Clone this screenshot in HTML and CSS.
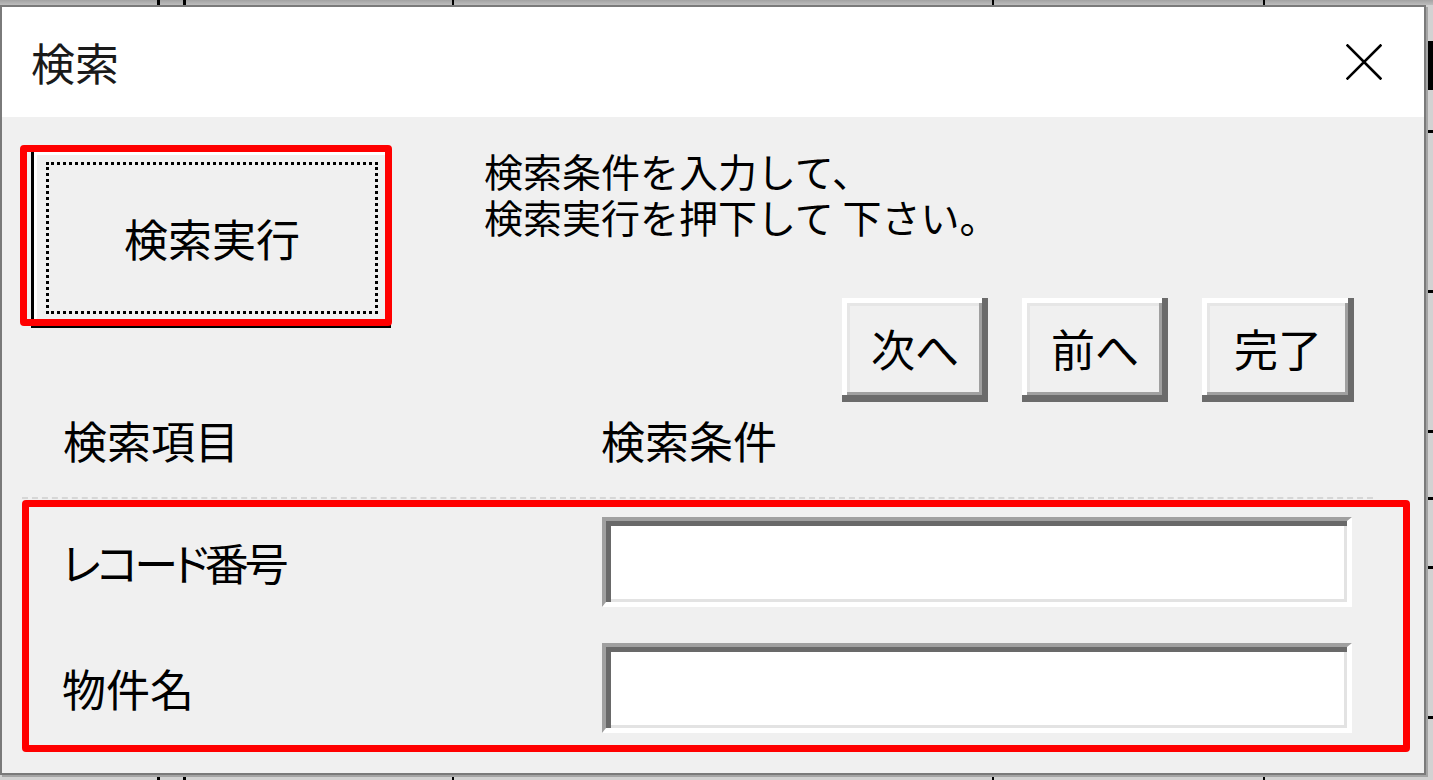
FILE: index.html
```html
<!DOCTYPE html>
<html lang="ja">
<head>
<meta charset="utf-8">
<title>検索</title>
<link rel="stylesheet" href="styles.css">
</head>
<body>
<div class="dialog">
  <div class="titlebar">
    <span class="title">検索</span>
    <svg class="close" width="36" height="36" viewBox="0 0 36 36" aria-label="閉じる">
      <path d="M1.5 1.5 L34.5 34.5 M34.5 1.5 L1.5 34.5" stroke="#000" stroke-width="2.6" fill="none" stroke-linecap="square"/>
    </svg>
  </div>
  <div class="body">
    <div class="top">
      <div class="exec-wrap">
        <button class="exec"><span class="focus">検索実行</span></button>
        <span class="mark mark-exec"></span>
      </div>
      <div class="side">
        <div class="hint">
          <span class="hint-line">検索条件を入力して、</span>
          <span class="hint-line">検索実行を押下して 下さい。</span>
        </div>
        <div class="nav">
          <button class="btn">次へ</button>
          <button class="btn">前へ</button>
          <button class="btn btn-wide">完了</button>
        </div>
      </div>
    </div>
    <div class="heads">
      <span>検索項目</span>
      <span>検索条件</span>
    </div>
    <div class="rule"></div>
    <div class="fields">
      <span class="label label-kana">レコード番号</span>
      <div class="textbox"></div>
      <span class="label">物件名</span>
      <div class="textbox"></div>
    </div>
  </div>
</div>
</body>
</html>
```
FILE: styles.css
```css
html, body {
  margin: 0;
  padding: 0;
}

body {
  width: 1433px;
  height: 780px;
  overflow: hidden;
  font-family: "Noto Sans CJK JP", "Noto Sans", sans-serif;
  color: #000;
  background-color: #d2d2d2;
  background-image:
    linear-gradient(#000, #000),
    linear-gradient(#000, #000),
    linear-gradient(#000, #000),
    linear-gradient(#000, #000),
    linear-gradient(#000, #000),
    linear-gradient(#000, #000),
    linear-gradient(#000, #000),
    linear-gradient(#000, #000),
    linear-gradient(#000, #000),
    linear-gradient(#000, #000),
    linear-gradient(#000, #000),
    linear-gradient(#000, #000),
    linear-gradient(#a3a3a3, #bdbdbd);
  background-position:
    157px 0, 183px 0, 452px 0, 992px 0, 1263px 0,
    1428px 41px, 1428px 130px, 1428px 290px, 1428px 430px, 1428px 497px, 1428px 566px, 1428px 716px,
    0 0;
  background-size:
    3px 100%, 3px 100%, 2px 100%, 2px 100%, 2px 100%,
    5px 49px, 5px 3px, 5px 3px, 5px 3px, 5px 3px, 5px 3px, 5px 3px,
    100% 5px;
  background-repeat: no-repeat;
}

.dialog {
  margin-top: 5px;
  width: 1426px;
  height: 770px;
  box-sizing: border-box;
  border: 2px solid #7a7a7a;
  background: #f0f0f0;
  box-shadow: 2px 2px 0 #a4a4a4;
  display: flex;
  flex-direction: column;
}

.titlebar {
  height: 110px;
  flex: none;
  background: #fff;
  display: flex;
  align-items: center;
  justify-content: space-between;
  padding: 0 42px 0 29px;
}

.title {
  font-size: 44px;
  line-height: 1;
  color: #1a1a1a;
}

.close {
  display: block;
}

.body {
  flex: 1;
  padding: 30px 0 0 29px;
}

.top {
  display: flex;
  align-items: flex-start;
}

.exec-wrap {
  position: relative;
  margin-top: 5px;
  flex: none;
}

.exec {
  display: flex;
  width: 360px;
  height: 176px;
  box-sizing: border-box;
  margin: 0;
  padding: 0;
  font: inherit;
  color: #000;
  background: #f0f0f0;
  border: none;
  border-left: 3px solid #000;
  border-right: 3px solid #000;
  border-bottom: 3px solid #000;
  box-shadow: inset 3px 3px 0 #fff, inset -3px -3px 0 #a0a0a0;
}

.focus {
  flex: 1;
  margin: 10px 10px 11px 12px;
  border: 3px dotted #000;
  display: flex;
  align-items: center;
  justify-content: center;
  font-size: 44px;
  line-height: 1;
}

.mark {
  position: absolute;
  box-sizing: border-box;
  border: 7px solid #ff0000;
  border-radius: 4px;
  pointer-events: none;
}

.mark-exec {
  left: -11px;
  top: -7px;
  width: 372px;
  height: 181px;
}

.side {
  flex: 1;
  margin-left: 93px;
  padding-right: 70px;
}

.hint {
  display: flex;
  flex-direction: column;
  font-size: 39px;
}

.hint-line {
  display: block;
  height: 46px;
  line-height: 46px;
  white-space: nowrap;
}

.nav {
  display: flex;
  justify-content: flex-end;
  gap: 34px;
  margin-top: 59px;
}

.btn {
  width: 146px;
  height: 104px;
  box-sizing: border-box;
  margin: 0;
  padding: 0 0 4px 0;
  font: inherit;
  font-size: 44px;
  line-height: 1;
  color: #000;
  background: #f0f0f0;
  border: none;
  box-shadow:
    inset -6px -7px 0 #6b6b6b,
    inset 5px 5px 0 #fff,
    inset -9px -10px 0 #a0a0a0,
    inset 8px 8px 0 #e6e6e6;
}

.btn-wide {
  width: 152px;
}

.heads {
  display: grid;
  grid-template-columns: 538px auto;
  padding-left: 32px;
  margin-top: 13px;
  font-size: 44px;
  line-height: 50px;
}

.rule {
  margin: 32px 0 1px -9px;
  width: 1351px;
  border-top: 2px dashed #d6d6d6;
}

.fields {
  margin-left: -9px;
  width: 1388px;
  box-sizing: border-box;
  border: 7px solid #ff0000;
  border-radius: 4px;
  display: grid;
  grid-template-columns: 540px 750px;
  grid-auto-rows: 90px;
  row-gap: 36px;
  align-items: center;
  padding: 10px 0 12px 33px;
}

.label {
  font-size: 44px;
  line-height: 50px;
  white-space: nowrap;
}

.label-kana {
  font-feature-settings: "palt" 1;
  letter-spacing: -4px;
}

.textbox {
  height: 90px;
  box-sizing: border-box;
  background: #fff;
  border-style: solid;
  border-width: 4px 5px 5px 4px;
  border-color: #a0a0a0 #fff #fff #a0a0a0;
  box-shadow: inset 5px 5px 0 #696969, inset -3px -3px 0 #e3e3e3;
}
```
